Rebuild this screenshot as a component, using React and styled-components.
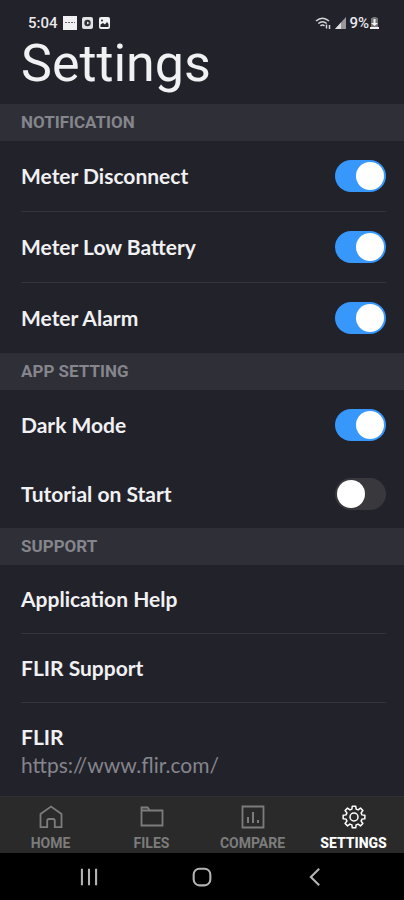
import React, { useState } from "react";
import styled, { createGlobalStyle } from "styled-components";

const GlobalStyle = createGlobalStyle`
  *, *::before, *::after { box-sizing: border-box; }
  body { margin: 0; background: #22222b; }
`;

const Screen = styled.div`
  min-height: 100vh;
  display: flex;
  flex-direction: column;
  background: #22222b;
  color: #f1f1f3;
  font-family: Lato, "Open Sans", sans-serif;
`;

const StatusBar = styled.div`
  display: flex;
  justify-content: space-between;
  align-items: center;
  height: 36px;
  padding: 10px 25px 0 28px;
  font: 500 15px/20px Roboto, sans-serif;
  color: #e9e9ec;
`;

const StatusGroup = styled.div`
  display: flex;
  align-items: center;
  gap: ${(p) => p.$gap}px;
`;

const Title = styled.h1`
  margin: 0;
  padding: 0 21px;
  height: 68px;
  font: 400 52px/56px Roboto, sans-serif;
`;

const Content = styled.main`
  flex: 1;
`;

const SectionTitle = styled.h2`
  margin: 0;
  padding: 0 21px;
  background: #2f2f38;
  color: #85858c;
  font: 700 17px/37px Roboto, sans-serif;
`;

const List = styled.ul`
  list-style: none;
  margin: 0;
  padding: 0 18px 0 21px;
`;

const Item = styled.li`
  &:not(:last-child) {
    border-bottom: ${(p) => (p.$divided ? "1px solid #34343d" : "0")};
  }
`;

const rowText = `
  font-family: Lato, "Open Sans", sans-serif;
  font-size: 21px;
  line-height: 28px;
  font-weight: 700;
  color: #f1f1f3;
`;

const SwitchRow = styled.label`
  display: flex;
  align-items: center;
  justify-content: space-between;
  min-height: ${(p) => (p.$compact ? 69 : 70)}px;
  cursor: pointer;
  ${rowText}
`;

const Switch = styled.input`
  appearance: none;
  display: flex;
  align-items: center;
  width: 51px;
  height: 32px;
  margin: 0;
  padding: 2px;
  border-radius: 16px;
  background: #38383d;
  cursor: pointer;

  &::before {
    content: "";
    width: 28px;
    height: 28px;
    border-radius: 50%;
    background: #fff;
  }
  &:checked {
    background: #3797fb;
    justify-content: flex-end;
  }
`;

const RowButton = styled.button`
  display: block;
  width: 100%;
  min-height: 68px;
  padding: 0;
  border: 0;
  background: none;
  text-align: left;
  cursor: pointer;
  ${rowText}
`;

const LinkRow = styled.a`
  display: block;
  padding: 20px 0 17px;
  text-decoration: none;
  ${rowText}
`;

const LinkAddress = styled.span`
  display: block;
  font-weight: 400;
  color: #85858c;
`;

const TabBar = styled.nav`
  display: grid;
  grid-template-columns: repeat(4, 1fr);
  height: 57px;
  background: #2a2a2a;
  border-top: 1px solid #303034;
`;

const Tab = styled.button`
  display: flex;
  flex-direction: column;
  align-items: center;
  gap: 5px;
  padding: 8px 0 0;
  border: 0;
  background: none;
  color: ${(p) => (p.$active ? "#ffffff" : "#7c7c7c")};
  font: ${(p) => (p.$active ? 800 : 700)} 14px/18px Roboto, sans-serif;
  cursor: pointer;
`;

const SystemBar = styled.div`
  display: grid;
  grid-template-columns: repeat(3, 1fr);
  height: 47px;
  padding: 0 32px;
  background: #000;
`;

const SystemButton = styled.button`
  display: flex;
  align-items: center;
  justify-content: center;
  padding: 0;
  border: 0;
  background: none;
  color: #b4b4b4;
  cursor: pointer;
`;

const icon = (size, children, width = 1.8) => (
  <svg width={size} height={size} viewBox="0 0 24 24" fill="none" stroke="currentColor" strokeWidth={width} aria-hidden="true">
    {children}
  </svg>
);

const gearPath = (() => {
  const points = [];
  for (let i = 0; i < 8; i++) {
    [[-15, 8.2], [-9, 11], [9, 11], [15, 8.2]].forEach(([offset, radius]) => {
      const angle = ((i * 45 + offset) * Math.PI) / 180;
      points.push(`${(12 + radius * Math.sin(angle)).toFixed(2)} ${(12 - radius * Math.cos(angle)).toFixed(2)}`);
    });
  }
  return `M${points.join("L")}Z`;
})();

const tabs = [
  { name: "HOME", art: icon(24, <path d="M1.5 22.2V9L12 1.5 22.5 9v13.2h-6.7v-6.5q0-1.7-1.7-1.7H9.9q-1.7 0-1.7 1.7v6.5Z" />) },
  { name: "FILES", art: icon(24, <path d="M1.5 20.5V2.5h6.2l2 3h12.8v15ZM1.5 5.5h8.2" />) },
  {
    name: "COMPARE",
    art: icon(24, <><path d="M1.5 1.5h21v21h-21Z" /><path d="M7 18v-6M12 18V7M17 18v-3" strokeWidth="2" /></>),
  },
  { name: "SETTINGS", art: icon(24, <><path d={gearPath} strokeLinejoin="round" /><circle cx="12" cy="12" r="4" /></>, 1.5) },
];

const notifications = [
  ["Meter Disconnect", true],
  ["Meter Low Battery", true],
  ["Meter Alarm", true],
];
const appSettings = [
  ["Dark Mode", true],
  ["Tutorial on Start", false],
];

function SwitchList({ items, divided, compact }) {
  return (
    <List>
      {items.map(([name, on]) => (
        <Item key={name} $divided={divided}>
          <SwitchRow $compact={compact}>
            {name}
            <Switch type="checkbox" role="switch" defaultChecked={on} />
          </SwitchRow>
        </Item>
      ))}
    </List>
  );
}

export default function App() {
  const [active, setActive] = useState("SETTINGS");
  return (
    <Screen>
      <GlobalStyle />
      <StatusBar>
        <StatusGroup $gap={5}>
          <span>5:04</span>
          <svg width="14" height="14" viewBox="0 0 14 14" aria-hidden="true">
            <path fill="#f1f1f3" d="M0 0h14v14H0Z" />
            <path stroke="#66666c" strokeDasharray="2 1" d="M2 6.5h10" />
          </svg>
          <svg width="11" height="14" viewBox="0 0 11 14" aria-hidden="true">
            <rect y="1" width="11" height="12" rx="2" fill="#e2e2e4" />
            <circle cx="5.5" cy="7" r="3.2" fill="#303038" />
            <path d="M5 5.5 7.5 7 5 8.5" fill="#e2e2e4" />
          </svg>
          <svg width="14" height="14" viewBox="0 0 14 14" aria-hidden="true">
            <rect x="1" y="1" width="11" height="12" rx="2" fill="#f1f1f3" />
            <path d="M2.500 11V8.500L5 7l2 1.500L9 6l1.500 2v3Z" fill="#26262e" />
            <circle cx="4" cy="4.500" r="1" fill="#26262e" />
          </svg>
        </StatusGroup>
        <StatusGroup $gap={3}>
          <svg width="17" height="14" viewBox="0 0 17 14" fill="none" stroke="#d6d6d9" strokeWidth="1.6" aria-hidden="true">
            <path d="M1 5q6.500-5.500 13 0M3.300 7.500q4.200-3.500 8.400 0M5.500 9.800q2-1.600 4 0" />
            <path d="M11.500 8.500v4M14.500 13V9" strokeWidth="1.500" />
          </svg>
          <svg width="11" height="12" viewBox="0 0 11 12" aria-hidden="true">
            <path d="M0 12 11 0v12Z" fill="#97979c" />
            <path d="M0 12 6 5.500V12Z" fill="#dededf" />
          </svg>
          <StatusGroup $gap={1}>
            <span>9%</span>
            <svg width="9" height="14" viewBox="0 0 9 14" aria-hidden="true">
              <path d="M2.500 1h4v1H8v11H1V2h1.500Z" fill="#737378" />
              <path d="M3.500 3h2v4H8L4.500 10 1 7h2.500ZM0 11h9v2H0Z" fill="#f1f1f3" />
            </svg>
          </StatusGroup>
        </StatusGroup>
      </StatusBar>
      <Title>Settings</Title>
      <Content>
        <SectionTitle>NOTIFICATION</SectionTitle>
        <SwitchList items={notifications} divided />
        <SectionTitle>APP SETTING</SectionTitle>
        <SwitchList items={appSettings} compact />
        <SectionTitle>SUPPORT</SectionTitle>
        <List>
          <Item $divided><RowButton type="button">Application Help</RowButton></Item>
          <Item $divided><RowButton type="button">FLIR Support</RowButton></Item>
          <Item $divided>
            <LinkRow href="https://www.flir.com/">
              FLIR
              <LinkAddress>https://www.flir.com/</LinkAddress>
            </LinkRow>
          </Item>
        </List>
      </Content>
      <TabBar>
        {tabs.map(({ name, art }) => (
          <Tab key={name} type="button" $active={name === active} onClick={() => setActive(name)}>
            {art}
            {name}
          </Tab>
        ))}
      </TabBar>
      <SystemBar>
        <SystemButton type="button" aria-label="Recent apps">{icon(20, <path d="M3.500 2v20M12 2v20M20.500 2v20" />, 2.5)}</SystemButton>
        <SystemButton type="button" aria-label="Home">{icon(20, <rect x="2" y="2" width="20" height="20" rx="7" />, 2.5)}</SystemButton>
        <SystemButton type="button" aria-label="Back">{icon(20, <path d="M17 2 7 12l10 10" />, 2.5)}</SystemButton>
      </SystemBar>
    </Screen>
  );
}
